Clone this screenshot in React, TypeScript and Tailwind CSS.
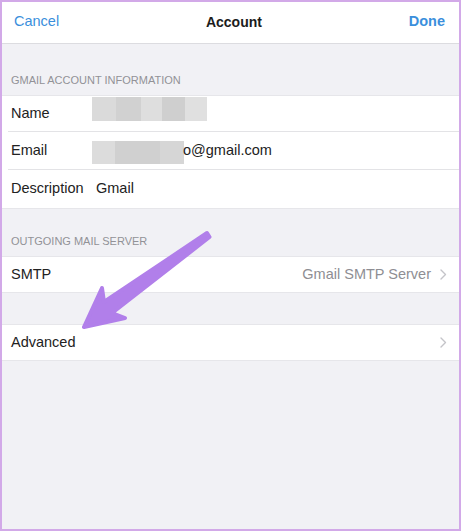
import { ReactNode } from "react";

const Chevron = () => (
  <svg width="7" height="11" viewBox="0 0 7 11" className="ml-[9px] shrink-0">
    <path d="M1 1l4.5 4.5L1 10" fill="none" stroke="#c4c4c9" strokeWidth="1.4" strokeLinecap="round" strokeLinejoin="round" />
  </svg>
);

// redaction blocks, as in the screenshot
const Blur = ({ cells, h }: { cells: [number, string][]; h: string }) => (
  <div className={`flex -ml-[4px] ${h}`}>
    {cells.map(([w, c], i) => (
      <div key={i} className="h-full" style={{ width: w, background: c }} />
    ))}
  </div>
);

function Row({ label, children, sep, h = "h-[38px]" }: { label: string; children?: ReactNode; sep?: boolean; h?: string }) {
  return (
    <div className={`relative flex items-center pl-[9px] ${h}`}>
      <span className="w-[85px] shrink-0 text-[#222]">{label}</span>
      <div className="flex items-center">{children}</div>
      {sep && <div className="absolute left-[6px] right-0 bottom-0 h-px bg-[#e3e3e6]" />}
    </div>
  );
}

export default function App() {
  return (
    <div
      className="relative w-[461px] h-[531px] overflow-hidden bg-[#f1f1f5] border-2 border-[#d2a9e8] text-[14.5px]"
      style={{ fontFamily: '"Liberation Sans", Arial, sans-serif' }}
    >
      {/* Nav bar */}
      <div className="flex items-center justify-between h-[43px] bg-white border-b border-[#dcdce0] pl-[12px] pr-[14px] -mt-[1px]">
        <span className="text-[#3b8fdc]">Cancel</span>
        <span className="font-bold text-[#1c1c1c] text-[14px]">Account</span>
        <span className="font-bold text-[#3b8fdc]">Done</span>
      </div>

      <div className="h-[51px] flex items-end pb-[7px] pl-[9px] text-[11px] text-[#929297]">GMAIL ACCOUNT INFORMATION</div>

      <div className="bg-white border-y border-[#e6e6ea]">
        <Row label="Name" sep h="h-[36px]">
          <Blur
            h="h-[24px] -mt-[10px]"
            cells={[
              [24, "#dadada"],
              [25, "#d1d1d1"],
              [21, "#dedede"],
              [23, "#cfcfcf"],
              [22, "#e0e0e0"],
            ]}
          />
        </Row>
        <Row label="Email" sep>
          <Blur
            h="h-[23px] mt-[3px]"
            cells={[
              [23, "#dcdcdc"],
              [45, "#d0d0d0"],
              [24, "#d6d6d6"],
            ]}
          />
          <span className="text-[#222] -ml-[1px]">o@gmail.com</span>
        </Row>
        <Row label="Description">
          <span className="text-[#222]">Gmail</span>
        </Row>
      </div>

      <div className="h-[47px] flex items-end pb-[7px] pl-[9px] text-[11px] text-[#929297]">OUTGOING MAIL SERVER</div>

      <div className="bg-white border-y border-[#e6e6ea] flex items-center h-[37px] pl-[9px] pr-[12px]">
        <span className="text-[#222]">SMTP</span>
        <span className="ml-auto text-[#8e8e93]">Gmail SMTP Server</span>
        <Chevron />
      </div>

      <div className="h-[31px]" />

      <div className="bg-white border-y border-[#e6e6ea] flex items-center h-[37px] pl-[9px] pr-[12px]">
        <span className="text-[#222]">Advanced</span>
        <span className="ml-auto" />
        <Chevron />
      </div>

      {/* Annotation arrow */}
      <svg className="absolute -left-[2px] -top-[2px] pointer-events-none" width="461" height="531" viewBox="0 0 461 531">
        <polygon
          points="207,233 104,302 102,288 84,327 125,318 112,313 209.5,237"
          fill="#b17fea"
          stroke="#b17fea"
          strokeWidth="4"
          strokeLinejoin="round"
        />
      </svg>
    </div>
  );
}
